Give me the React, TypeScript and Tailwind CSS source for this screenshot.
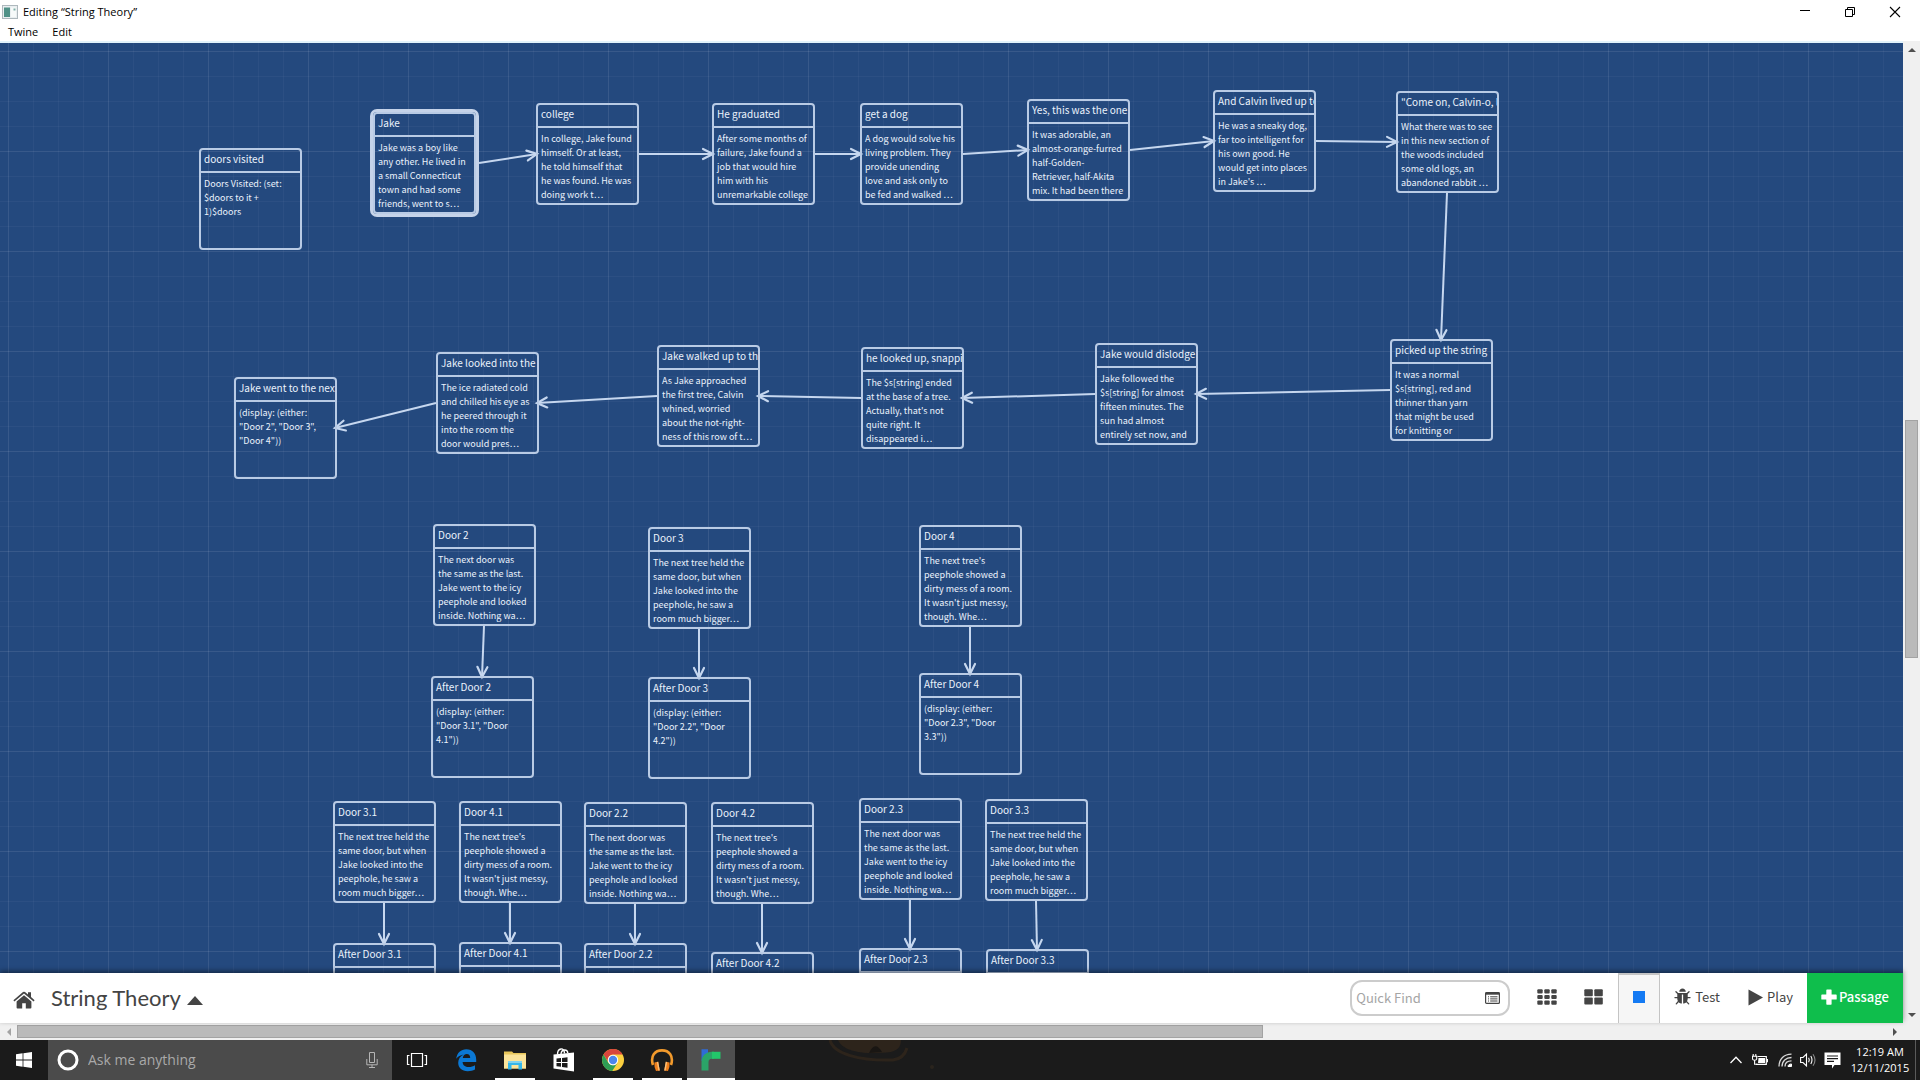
import React, { useState } from 'react';

interface Passage {
  id: string;
  title: string;
  x: number;
  y: number;
  text: string;
  start?: boolean;
}

interface Link {
  from: string;
  to: string;
  dir: 'right' | 'left' | 'down';
}

const WIDTH = 103;
const HEIGHT = 102;

const NEXT_DOOR = 'The next door was\nthe same as the last.\nJake went to the icy\npeephole and looked\ninside. Nothing wa…';
const NEXT_HELD = 'The next tree held the\nsame door, but when\nJake looked into the\npeephole, he saw a\nroom much bigger…';
const NEXT_TREE = "The next tree's\npeephole showed a\ndirty mess of a room.\nIt wasn't just messy,\nthough. Whe…";

const passages: Passage[] = [
  { id: 'visited', title: 'doors visited', x: 199, y: 105, text: 'Doors Visited: (set:\n$doors to it +\n1)$doors' },
  { id: 'jake', title: 'Jake', x: 373, y: 69, start: true, text: 'Jake was a boy like\nany other. He lived in\na small Connecticut\ntown and had some\nfriends, went to s…' },
  { id: 'college', title: 'college', x: 536, y: 60, text: 'In college, Jake found\nhimself. Or at least,\nhe told himself that\nhe was found. He was\ndoing work t…' },
  { id: 'graduated', title: 'He graduated', x: 712, y: 60, text: 'After some months of\nfailure, Jake found a\njob that would hire\nhim with his\nunremarkable college' },
  { id: 'dog', title: 'get a dog', x: 860, y: 60, text: 'A dog would solve his\nliving problem. They\nprovide unending\nlove and ask only to\nbe fed and walked …' },
  { id: 'yes', title: 'Yes, this was the one.', x: 1027, y: 56, text: 'It was adorable, an\nalmost-orange-furred\nhalf-Golden-\nRetriever, half-Akita\nmix. It had been there' },
  { id: 'calvin', title: 'And Calvin lived up to', x: 1213, y: 47, text: "He was a sneaky dog,\nfar too intelligent for\nhis own good. He\nwould get into places\nin Jake's …" },
  { id: 'come', title: '"Come on, Calvin-o, l', x: 1396, y: 48, text: 'What there was to see\nin this new section of\nthe woods included\nsome old logs, an\nabandoned rabbit …' },
  { id: 'picked', title: 'picked up the string', x: 1390, y: 296, text: 'It was a normal\n$s[string], red and\nthinner than yarn\nthat might be used\nfor knitting or' },
  { id: 'dislodge', title: 'Jake would dislodge', x: 1095, y: 300, text: 'Jake followed the\n$s[string] for almost\nfifteen minutes. The\nsun had almost\nentirely set now, and' },
  { id: 'snapping', title: 'he looked up, snappi', x: 861, y: 304, text: "The $s[string] ended\nat the base of a tree.\nActually, that's not\nquite right. It\ndisappeared i…" },
  { id: 'walked', title: 'Jake walked up to th', x: 657, y: 302, text: 'As Jake approached\nthe first tree, Calvin\nwhined, worried\nabout the not-right-\nness of this row of t…' },
  { id: 'looked', title: 'Jake looked into the', x: 436, y: 309, text: 'The ice radiated cold\nand chilled his eye as\nhe peered through it\ninto the room the\ndoor would pres…' },
  { id: 'next', title: 'Jake went to the next', x: 234, y: 334, text: '(display: (either:\n"Door 2", "Door 3",\n"Door 4"))' },
  { id: 'd2', title: 'Door 2', x: 433, y: 481, text: NEXT_DOOR },
  { id: 'd3', title: 'Door 3', x: 648, y: 484, text: NEXT_HELD },
  { id: 'd4', title: 'Door 4', x: 919, y: 482, text: NEXT_TREE },
  { id: 'a2', title: 'After Door 2', x: 431, y: 633, text: '(display: (either:\n"Door 3.1", "Door\n4.1"))' },
  { id: 'a3', title: 'After Door 3', x: 648, y: 634, text: '(display: (either:\n"Door 2.2", "Door\n4.2"))' },
  { id: 'a4', title: 'After Door 4', x: 919, y: 630, text: '(display: (either:\n"Door 2.3", "Door\n3.3"))' },
  { id: 'd31', title: 'Door 3.1', x: 333, y: 758, text: NEXT_HELD },
  { id: 'd41', title: 'Door 4.1', x: 459, y: 758, text: NEXT_TREE },
  { id: 'd22', title: 'Door 2.2', x: 584, y: 759, text: NEXT_DOOR },
  { id: 'd42', title: 'Door 4.2', x: 711, y: 759, text: NEXT_TREE },
  { id: 'd23', title: 'Door 2.3', x: 859, y: 755, text: NEXT_DOOR },
  { id: 'd33', title: 'Door 3.3', x: 985, y: 756, text: NEXT_HELD },
  { id: 'a31', title: 'After Door 3.1', x: 333, y: 900, text: '' },
  { id: 'a41', title: 'After Door 4.1', x: 459, y: 899, text: '' },
  { id: 'a22', title: 'After Door 2.2', x: 584, y: 900, text: '' },
  { id: 'a42', title: 'After Door 4.2', x: 711, y: 909, text: '' },
  { id: 'a23', title: 'After Door 2.3', x: 859, y: 905, text: '' },
  { id: 'a33', title: 'After Door 3.3', x: 986, y: 906, text: '' },
];

const links: Link[] = [
  { from: 'jake', to: 'college', dir: 'right' },
  { from: 'college', to: 'graduated', dir: 'right' },
  { from: 'graduated', to: 'dog', dir: 'right' },
  { from: 'dog', to: 'yes', dir: 'right' },
  { from: 'yes', to: 'calvin', dir: 'right' },
  { from: 'calvin', to: 'come', dir: 'right' },
  { from: 'come', to: 'picked', dir: 'down' },
  { from: 'picked', to: 'dislodge', dir: 'left' },
  { from: 'dislodge', to: 'snapping', dir: 'left' },
  { from: 'snapping', to: 'walked', dir: 'left' },
  { from: 'walked', to: 'looked', dir: 'left' },
  { from: 'looked', to: 'next', dir: 'left' },
  { from: 'd2', to: 'a2', dir: 'down' },
  { from: 'd3', to: 'a3', dir: 'down' },
  { from: 'd4', to: 'a4', dir: 'down' },
  { from: 'd31', to: 'a31', dir: 'down' },
  { from: 'd41', to: 'a41', dir: 'down' },
  { from: 'd22', to: 'a22', dir: 'down' },
  { from: 'd42', to: 'a42', dir: 'down' },
  { from: 'd23', to: 'a23', dir: 'down' },
  { from: 'd33', to: 'a33', dir: 'down' },
];

function linkEnds(link: Link) {
  const a = passages.find((p) => p.id === link.from)!;
  const b = passages.find((p) => p.id === link.to)!;
  const half = 51;
  if (link.dir === 'down') return [a.x + half, a.y + HEIGHT, b.x + half, b.y + 1];
  if (link.dir === 'right') return [a.x + WIDTH + (a.start ? 3 : 0), a.y + half, b.x + 1, b.y + half];
  return [a.x, a.y + half, b.x + WIDTH - 2, b.y + half];
}

function Links() {
  return (
    <svg className="absolute inset-0 w-full h-full" aria-hidden="true">
      <defs>
        <marker id="arrow" markerUnits="userSpaceOnUse" markerWidth="16" markerHeight="16" refX="12" refY="7" orient="auto">
          <path d="M2 2 L12 7 L2 12" fill="none" stroke="#c6d7ef" strokeWidth="2.2" strokeLinecap="round" />
        </marker>
      </defs>
      {links.map((link) => {
        const [x1, y1, x2, y2] = linkEnds(link);
        return (
          <line key={link.from + link.to} x1={x1} y1={y1} x2={x2} y2={y2} stroke="#c6d7ef" strokeWidth="2" markerEnd="url(#arrow)" />
        );
      })}
    </svg>
  );
}

function PassageCard({ passage }: { passage: Passage }) {
  return (
    <article
      style={{ left: passage.x, top: passage.y }}
      className={`absolute w-[103px] h-[102px] border-2 border-[#b9cbe5] rounded-sm overflow-hidden text-[#ebf2fc] ${
        passage.start ? 'ring-3 ring-[#c5d3e9]' : ''
      }`}
    >
      <h2 className="h-[23px] px-[3px] border-b-2 border-[#b9cbe5] text-[10px] leading-[18px] whitespace-nowrap">
        {passage.title}
      </h2>
      <p className="px-[3px] pt-1 text-[9px] leading-[14px] whitespace-pre">{passage.text}</p>
    </article>
  );
}

/* Toolbar icons */
function BugIcon() {
  return (
    <svg className="w-[17px] h-5" viewBox="0 0 1664 1792" fill="currentColor" aria-hidden="true">
      <path d="M1632 960q0 26-19 45t-45 19h-224q0 171-67 290l208 209q19 19 19 45t-19 45q-18 19-45 19t-45-19l-198-197q-5 5-15 13t-42 28.5-65 36.5-82 29-97 13v-896h-128v896q-51 0-101.5-13.5t-87-33-66-39-43.5-32.5l-15-14-183 207q-20 21-48 21-24 0-43-16-19-18-20.5-44.5t15.5-46.5l202-227q-58-114-58-274h-224q-26 0-45-19t-19-45 19-45 45-19h224v-294l-173-173q-19-19-19-45t19-45 45-19 45 19l173 173h844l173-173q19-19 45-19t45 19 19 45-19 45l-173 173v294h224q26 0 45 19t19 45zm-480-576h-640q0-133 93.5-226.5t226.5-93.5 226.5 93.5 93.5 226.5z" />
    </svg>
  );
}

function HomeIcon() {
  return (
    <svg className="w-[22px] h-[18px]" viewBox="0 0 22 18" fill="currentColor" aria-hidden="true">
      <path d="M11 4.2 L3.6 10.4 V16.6 Q3.6 17.5 4.5 17.5 H9.2 V12.3 H12.8 V17.5 H17.5 Q18.4 17.5 18.4 16.6 V10.4 Z" />
      <path d="M0.4 9.2 L10 1 Q11 0.3 12 1 L15 3.5 V1.2 H18 V6 L21.6 9.2 L20.6 10.4 L11 2.6 L1.4 10.4 Z" />
    </svg>
  );
}

function GridIcon({ count }: { count: 2 | 3 }) {
  const cell = count === 3 ? 5.4 : 8.5;
  const cellH = count === 3 ? 4.2 : 7;
  const cells = Array.from({ length: count * count }, (_, i) => [i % count, Math.floor(i / count)]);
  return (
    <svg className="w-5 h-4" viewBox="0 0 20 16" fill="currentColor" aria-hidden="true">
      {cells.map(([cx, cy]) => (
        <rect
          key={`${cx}-${cy}`}
          x={cx * (count === 3 ? 7 : 10) + 0.3}
          y={cy * (count === 3 ? 5.6 : 8.2) + 0.3}
          width={cell}
          height={cellH}
          rx="1"
        />
      ))}
    </svg>
  );
}

function Arrow({ d, label, dim }: { d: string; label: string; dim?: boolean }) {
  return (
    <button aria-label={label} className={`w-[17px] h-[17px] flex items-center justify-center shrink-0 ${dim ? 'text-[#a3a3a3]' : 'text-[#505050]'}`}>
      <svg className="w-2 h-2" viewBox="0 0 8 8" fill="currentColor" aria-hidden="true">
        <path d={d} />
      </svg>
    </button>
  );
}

function Toolbar() {
  const [zoom, setZoom] = useState('small');
  const [find, setFind] = useState('');

  const zoomClass = (name: string) =>
    `h-full w-[42px] flex items-center justify-center border-x border-t-2 pb-1 ${
      zoom === name ? 'border-[#c4c4c4] bg-[#f6f6f6]' : 'border-transparent'
    }`;

  return (
    <div className="h-[50px] shrink-0 bg-white flex items-center text-[#444] shadow-[0_-2px_5px_rgba(0,0,0,0.45)] relative">
      <button aria-label="Home" className="ml-[13px] pt-1">
        <HomeIcon />
      </button>
      <button className="ml-4 flex items-center gap-[6px] font-['Lato',sans-serif] text-[22px] leading-7">
        String Theory
        <svg className="w-4 h-[9px] mt-1" viewBox="0 0 16 9" fill="currentColor" aria-hidden="true">
          <path d="M8 0 L16 9 H0 Z" />
        </svg>
      </button>

      <div className="ml-auto flex items-center h-full text-[13px]">
        <div className="w-[160px] h-[36px] flex items-center border-2 border-[#ccc] rounded-xl pl-1 pr-2">
          <input
            type="text"
            aria-label="Quick Find"
            placeholder="Quick Find"
            value={find}
            onChange={(e) => setFind(e.target.value)}
            className="min-w-0 flex-1 outline-none placeholder:text-[#a5a5a5]"
          />
          <button aria-label="Search options">
            <svg className="w-[15px] h-3" viewBox="0 0 15 12" aria-hidden="true">
              <rect x="0.6" y="0.6" width="13.8" height="10.8" rx="1" fill="none" stroke="#444" strokeWidth="1.2" />
              <path d="M0.5 1.5 H14.5" stroke="#444" strokeWidth="2.4" />
              <path d="M3 4.8 H4 M3 6.9 H4 M3 9 H4 M5.2 4.8 H12.5 M5.2 6.9 H12.5 M5.2 9 H12.5" stroke="#444" strokeWidth="1" />
            </svg>
          </button>
        </div>
        <button aria-label="Zoom out" onClick={() => setZoom('large')} className={`ml-4 ${zoomClass('large')}`}>
          <GridIcon count={3} />
        </button>
        <button aria-label="Zoom middle" onClick={() => setZoom('medium')} className={`ml-[5px] mr-[3px] ${zoomClass('medium')}`}>
          <GridIcon count={2} />
        </button>
        <button aria-label="Zoom in" onClick={() => setZoom('small')} className={zoomClass('small')}>
          <span className="w-3 h-3 bg-[#147af3]" />
        </button>
        <button className="ml-[14px] flex items-center gap-1 pb-[2px]">
          <BugIcon />
          Test
        </button>
        <button className="ml-7 flex items-center gap-1 pb-[2px]">
          <svg className="w-[15px] h-[17px]" viewBox="0 0 15 17" fill="currentColor" aria-hidden="true">
            <path d="M0.5 0.5 L15 8.5 L0.5 16.5 Z" />
          </svg>
          Play
        </button>
        <button className="ml-[14px] h-full w-24 pb-[2px] flex items-center justify-center gap-[2px] bg-[#0fbe4c] text-white font-medium">
          <svg className="w-4 h-4" viewBox="0 0 16 16" fill="currentColor" aria-hidden="true">
            <path d="M6 0.5 H10 Q10.6 0.5 10.6 1.2 V5.6 H15 Q15.7 5.6 15.7 6.2 V10 Q15.7 10.6 15 10.6 H10.6 V15 Q10.6 15.7 10 15.7 H6 Q5.3 15.7 5.3 15 V10.6 H1 Q0.3 10.6 0.3 10 V6.2 Q0.3 5.6 1 5.6 H5.3 V1.2 Q5.3 0.5 6 0.5 Z" />
          </svg>
          Passage
        </button>
      </div>
    </div>
  );
}

function TaskButton({ label, running, active, children }: { label: string; running?: boolean; active?: boolean; children: React.ReactNode }) {
  return (
    <button aria-label={label} className={`w-12 h-full flex flex-col items-center pt-2 justify-between ${active ? 'bg-[#4f4f4f]' : ''}`}>
      <svg className="w-6 h-6" viewBox="0 0 24 24" aria-hidden="true">
        {children}
      </svg>
      <span className={`h-[2px] ${active ? 'w-full' : 'w-10'} ${running ? 'bg-white' : ''}`} />
    </button>
  );
}

function Taskbar() {
  return (
    <footer className="h-10 shrink-0 bg-[#1b1b1b] flex items-center text-white font-['Open_Sans',sans-serif]">
      <button aria-label="Start" className="w-12 h-full flex items-center justify-center">
        <svg className="w-4 h-4" viewBox="0 0 16 16" fill="#fff" aria-hidden="true">
          <path d="M0 2.2 L6.6 1.3 V7.6 H0 Z M7.4 1.2 L16 0 V7.6 H7.4 Z M0 8.4 H6.6 V14.7 L0 13.8 Z M7.4 8.4 H16 V16 L7.4 14.8 Z" />
        </svg>
      </button>
      <div className="w-[344px] h-full bg-[#4b4b4b] flex items-center pl-[9px] pr-[14px]">
        <svg className="w-[22px] h-[22px]" viewBox="0 0 22 22" aria-hidden="true">
          <circle cx="11" cy="11" r="9" fill="none" stroke="#fff" strokeWidth="3" />
        </svg>
        <input
          type="text"
          aria-label="Ask me anything"
          placeholder="Ask me anything"
          className="ml-[9px] min-w-0 flex-1 text-sm outline-none placeholder:text-[#a9a9a9]"
        />
        <button aria-label="Voice search">
          <svg className="w-3 h-4" viewBox="0 0 12 16" fill="none" stroke="#b5b5b5" aria-hidden="true">
            <path d="M3.5 0.5 H8.5 V10.5 H3.5 Z M0.8 7 V12.8 H11.2 V7 M6 12.8 V15.5 M3 15.5 H9" />
          </svg>
        </button>
      </div>
      <button aria-label="Task view" className="w-[50px] h-full flex items-center justify-center">
        <svg className="w-[22px] h-4" viewBox="0 0 22 16" fill="none" stroke="#fff" aria-hidden="true">
          <path d="M5.5 1.5 H16.5 V14.5 H5.5 Z M3.5 3.5 H1.5 V12.5 H3.5 M18.5 3.5 H20.5 V12.5 H18.5" strokeWidth="1.2" />
        </svg>
      </button>

      <nav className="h-full flex gap-px">
        <TaskButton label="Edge">
          <path
            fill="#0b78d4"
            d="M2.2 10.8 C3 4.6 7 1.2 12.3 1.2 C18.6 1.2 22.2 5.8 22.2 11.4 V14 H8.6 C8.8 17.6 11.4 19 14.6 19 C17.2 19 19.2 18.3 21 17.2 V21.6 C18.9 22.7 16.6 23.2 13.8 23.2 C7.6 23.2 4.2 19.6 4.2 14.7 C4.2 11 6.2 8 9.6 6.4 C6.4 7 3.8 8.6 2.2 10.8 Z M8.8 10 H16.2 C16.2 7.4 15 5.9 12.8 5.9 C10.7 5.9 9.2 7.4 8.8 10 Z"
          />
        </TaskButton>
        <TaskButton label="File Explorer" running>
          <path fill="#e8c65a" d="M1 3.5 H9 L10.5 5 H23 V20.5 H1 Z" />
          <path fill="#fbe49a" d="M1 6.5 H23 V20.5 H1 Z" />
          <path fill="#35b6e8" d="M5 13 H19 V21.5 H15.5 V17 H8.5 V21.5 H5 Z" />
          <path fill="#7fd3ee" d="M5 13 H19 V15 H5 Z" />
        </TaskButton>
        <TaskButton label="Store">
          <path fill="#fff" d="M1.5 6.5 L22 4.5 V23.5 L1.5 20.5 Z" />
          <path fill="none" stroke="#fff" strokeWidth="1.4" d="M5.5 6.5 C5.5 -0.5 12.5 -1 12.5 5.5 M9 6 C9.5 0.5 15.5 1 15.8 5" />
          <path fill="#1b1b1b" d="M4.5 10.5 L9 10 V14 H4.5 Z M10 9.9 L15.5 9.2 V14 H10 Z M4.5 15 H9 V18.8 L4.5 18.2 Z M10 15 H15.5 V19.7 L10 18.9 Z" />
        </TaskButton>
        <TaskButton label="Chrome" running>
          <circle cx="12" cy="12" r="11" fill="#fbcf3f" />
          <path fill="#d9453c" d="M2.5 6.5 A11 11 0 0 1 21.6 6.5 H12 A5.5 5.5 0 0 0 6.8 13.5 Z" />
          <path fill="#2e9e55" d="M2.5 6.5 A11 11 0 0 0 11.2 23 L16.6 14.8 A5.5 5.5 0 0 1 7.2 14.6 Z" />
          <circle cx="12" cy="12" r="5.2" fill="#fff" />
          <circle cx="12" cy="12" r="4.2" fill="#4c86ec" />
        </TaskButton>
        <TaskButton label="Music" running>
          <path fill="none" stroke="#f29a2c" strokeWidth="2.6" d="M3 17 C0 8 5 2.4 12 2.4 C19 2.4 24 8 21 17" />
          <path fill="#f07f1c" d="M4.4 14.5 L8.2 13.8 L9.8 22.6 L6 23 Q4 19.5 4.4 14.5 Z M19.6 14.5 L15.8 13.8 L14.2 22.6 L18 23 Q20 19.5 19.6 14.5 Z" />
          <path fill="#fbc07a" d="M6.8 14 L8.2 13.8 L9.8 22.6 L8.4 22.7 Z M17.2 14 L15.8 13.8 L14.2 22.6 L15.6 22.7 Z" />
        </TaskButton>
        <TaskButton label="Twine" running active>
          <path fill="#2f6bd6" d="M2.5 1.2 H9 V9 L2.5 13 Z" />
          <path fill="#2aa468" d="M2.5 22.5 V14 C2.5 8 7 3.8 13 3.8 H15 V10.8 H13 C10.5 10.8 9.5 12 9.5 14.5 V22.5 Z" />
          <path fill="#22c76a" d="M13 3.8 H21.5 V10.8 H13 Z" />
        </TaskButton>
      </nav>

      {/* Wallpaper showing through the translucent bar */}
      <svg className="ml-[90px] w-[120px] h-10" viewBox="0 0 120 40" fill="none" aria-hidden="true">
        <path d="M5 0 C8 14 35 21 68 20 C76 19 80 15 82 8" stroke="#2d241b" strokeWidth="3" />
        <path d="M13 0 C18 12 40 15 66 12 C74 10 76 5 76 0" fill="#2d241b" />
        <path d="M44 13 Q50 0 57 12" fill="#191613" />
        <circle cx="107" cy="27" r="2" fill="#2a241d" />
      </svg>

      <div className="ml-auto flex items-center gap-2">
        <button aria-label="Show hidden icons" className="mr-[2px]">
          <svg className="w-3 h-2" viewBox="0 0 12 8" fill="none" stroke="#fff" strokeWidth="1.3" aria-hidden="true">
            <path d="M0.5 7 L6 1.3 L11.5 7" />
          </svg>
        </button>
        <svg className="w-4 h-4" viewBox="0 0 16 16" aria-hidden="true">
          <path d="M5.5 4.5 H14.3 V12.3 H4" fill="none" stroke="#fff" strokeWidth="1.2" />
          <path d="M6.5 6 H13 V11 H6 Z M14.8 6.9 H16 V10.2 H14.8 Z" fill="#fff" />
          <path d="M1.2 2 V4 M3.8 2 V4 M0.5 4.2 H4.7 V7 Q4.5 8.2 2.6 8.2 Q0.6 8.2 0.5 7 Z M2.6 8 V12.3 H5" fill="none" stroke="#fff" strokeWidth="1.1" />
        </svg>
        <svg className="ml-[2px] w-[14px] h-[14px]" viewBox="0 0 14 14" fill="none" stroke="#fff" aria-hidden="true">
          <path d="M1 13.5 C1 6 6 1.2 13.5 1.2 M4 13.5 C4 8 8 4.5 13.5 4.5 M7 13.5 C7 10 9.5 7.8 13.5 7.8" strokeWidth="1.3" stroke="#d8d8d8" />
          <path d="M10 13.5 C10 11.8 11.5 11 13.5 11 V13.5 Z" fill="#fff" />
        </svg>
        <svg className="w-4 h-4" viewBox="0 0 16 16" fill="none" stroke="#fff" strokeWidth="1.1" aria-hidden="true">
          <path d="M0.6 5.5 H3 L6.5 2 V14 L3 10.5 H0.6 Z M8.6 5.8 Q10 8 8.6 10.2 M10.8 4 Q13.2 8 10.8 12" />
          <path d="M13 2.2 Q17 8 13 13.8" stroke="#888" />
        </svg>
        <button aria-label="Notifications">
          <svg className="w-[17px] h-[17px]" viewBox="0 0 17 17" aria-hidden="true">
            <path d="M0.5 0.5 H16.5 V13 H10.5 L8 16.5 V13 H0.5 Z" fill="#fff" />
            <path d="M3 4 H14 M3 6.7 H14 M3 9.4 H10" stroke="#1b1b1b" strokeWidth="1.2" />
          </svg>
        </button>
        <div className="w-[62px] text-center text-[11px] leading-4">
          <div>12:19 AM</div>
          <div>12/11/2015</div>
        </div>
        <span className="-ml-1 h-10 w-px bg-[#5a5a5a] mr-1" />
      </div>
    </footer>
  );
}

export default function App() {
  return (
    <div className="h-screen flex flex-col overflow-hidden bg-white font-['Noto_Sans_CJK_SC',sans-serif]">
      {/* Window title and menu */}
      <header className="shrink-0 font-['Open_Sans',sans-serif] text-black">
        <div className="h-[23px] flex items-center pl-[2px]">
          <svg className="w-4 h-[14px]" viewBox="0 0 16 14" aria-hidden="true">
            <rect x="0.5" y="0.5" width="15" height="13" fill="#e9eef0" stroke="#aeb8bd" />
            <rect x="2" y="2.5" width="6" height="9.5" fill="#4f9187" />
            <rect x="9" y="2.5" width="5" height="9.5" fill="#f7fafa" />
            <rect x="11.5" y="3.5" width="2" height="2" fill="#7fb0a8" />
          </svg>
          <h1 className="ml-[5px] text-[11px] leading-4">Editing “String Theory”</h1>
          <div className="ml-auto mr-[19px] flex items-center gap-[33px]">
            <button aria-label="Minimize">
              <svg className="w-3 h-3" viewBox="0 0 12 12" stroke="#000" fill="none" aria-hidden="true">
                <path d="M1 4.5 H11" />
              </svg>
            </button>
            <button aria-label="Restore">
              <svg className="w-3 h-3" viewBox="0 0 12 12" stroke="#000" fill="none" aria-hidden="true">
                <path d="M1.5 3.5 H8.5 V10.5 H1.5 Z M3.5 3.5 V1.5 H10.5 V8.5 H8.5" />
              </svg>
            </button>
            <button aria-label="Close">
              <svg className="w-3 h-3" viewBox="0 0 12 12" stroke="#000" fill="none" aria-hidden="true">
                <path d="M1 1 L11 11 M11 1 L1 11" strokeWidth="1.1" />
              </svg>
            </button>
          </div>
        </div>
        <nav className="h-[18px] flex items-center gap-[14px] pl-2 text-[11px] leading-4">
          <button>Twine</button>
          <button>Edit</button>
        </nav>
      </header>

      <div className="flex-1 min-h-0 flex">
        <main className="flex-1 min-w-0 flex flex-col">
          <div className="flex-1 min-h-0 relative overflow-hidden border-t-2 border-[#e2f3fb] bg-[#24497e]">
            <div className="absolute inset-0 bg-[8px_8px] bg-size-[25px_25px] bg-[linear-gradient(rgba(255,255,255,0.035)_1px,transparent_1px),linear-gradient(90deg,rgba(255,255,255,0.035)_1px,transparent_1px)]" />
            <div className="absolute inset-0 bg-[8px_8px] bg-size-[100px_100px] bg-[linear-gradient(rgba(255,255,255,0.06)_1px,transparent_1px),linear-gradient(90deg,rgba(255,255,255,0.06)_1px,transparent_1px)]" />
            <Links />
            {passages.map((p) => (
              <PassageCard key={p.id} passage={p} />
            ))}
          </div>
          <Toolbar />
          {/* Horizontal scrollbar */}
          <div className="h-[17px] shrink-0 flex items-center bg-[#f0f0f0]">
            <Arrow label="Scroll left" d="M6 0 V8 L2 4 Z" dim />
            <div className="flex-1 flex">
              <div className="w-2/3 h-[13px] bg-[#bababa] border border-[#a3a3a3]" />
            </div>
            <Arrow label="Scroll right" d="M2 0 V8 L6 4 Z" />
          </div>
        </main>
        {/* Vertical scrollbar */}
        <div className="w-[17px] shrink-0 bg-[#f0f0f0] flex flex-col items-center pb-[17px]">
          <Arrow label="Scroll up" d="M0 6 H8 L4 2 Z" />
          <div className="flex-1 flex flex-col items-center">
            <div className="flex-[363]" />
            <div className="flex-[236] w-[13px] bg-[#bababa] border border-[#a3a3a3]" />
            <div className="flex-[349]" />
          </div>
          <Arrow label="Scroll down" d="M0 2 H8 L4 6 Z" />
        </div>
      </div>

      <Taskbar />
    </div>
  );
}
